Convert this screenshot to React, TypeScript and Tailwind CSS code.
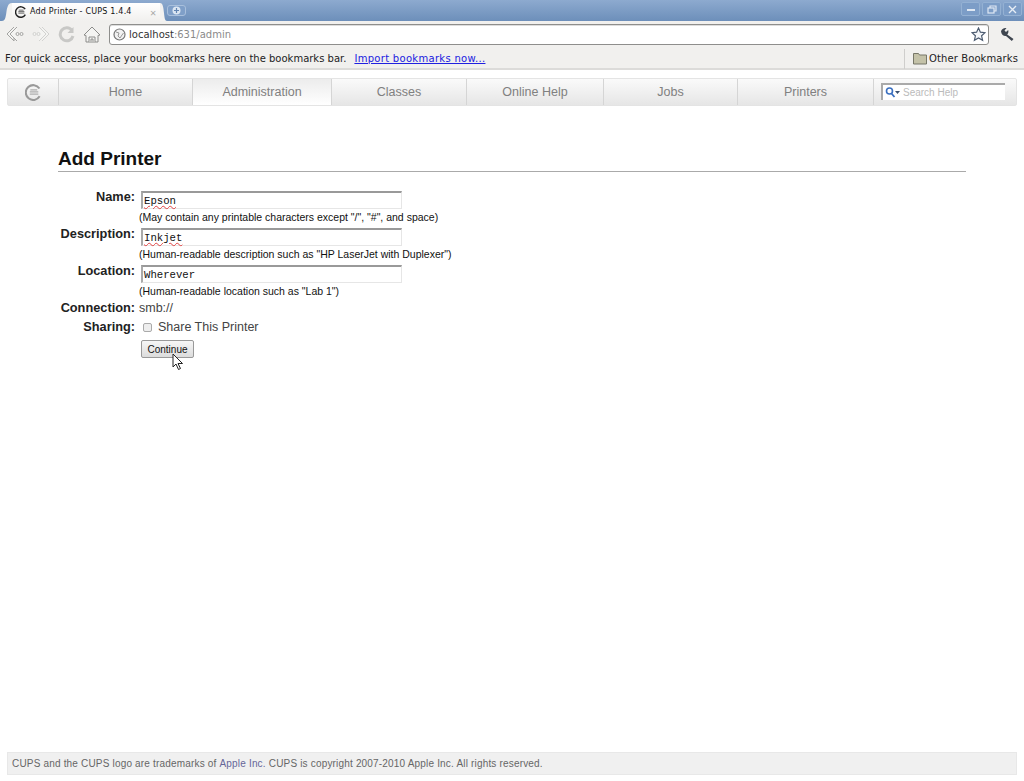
import React from "react";

const navItems = [
  { label: "Home", width: "w-[134px]" },
  { label: "Administration", width: "w-[139px]", active: true },
  { label: "Classes", width: "w-[135px]" },
  { label: "Online Help", width: "w-[137px]" },
  { label: "Jobs", width: "w-[134px]" },
  { label: "Printers", width: "w-[136px]" },
];

function CupsLogo({ size, color }: { size: number; color: string }) {
  return (
    <svg width={size} height={size} viewBox="0 0 16 16" fill="none">
      <path d="M13.6 4.2A7 7 0 1 0 13.8 11.6" stroke={color} strokeWidth="1.9" />
      <path d="M5 5.5h6.5M4.5 7.5h8M4.5 9.5h8" stroke={color} strokeWidth="1.2" opacity="0.75" />
    </svg>
  );
}

function TitleBar() {
  return (
    <div className="flex h-[21px] bg-gradient-to-b from-[#8daacf] to-[#6d8fba]">
      <div className="flex items-end pl-[2px]">
        <svg width="10" height="18" viewBox="0 0 14 18" preserveAspectRatio="none">
          <path d="M0 18C4 18 5 15 6 10C7 5 8 0 14 0V18Z" fill="#f3f2f0" />
        </svg>
        <div className="flex h-[18px] w-[148px] items-center bg-gradient-to-b from-white to-[#f1f0ee] pl-[3px]">
          <CupsLogo size={12} color="#222" />
          <span className="ml-[3px] w-[120px] whitespace-nowrap font-['DejaVu_Sans',sans-serif] text-[8px] tracking-[0.2px] text-[#111]">
            Add Printer - CUPS 1.4.4
          </span>
          <span className="text-[11px] leading-none text-[#aaa]">×</span>
        </div>
        <svg width="7" height="18" viewBox="0 0 14 18" preserveAspectRatio="none">
          <path d="M14 18C10 18 9 15 8 10C7 5 6 0 0 0V18Z" fill="#f3f2f0" />
        </svg>
      </div>
      <div className="mt-[5px] flex h-[11px] w-[19px] items-center justify-center rounded-[3px] border border-[#a9c0dc] bg-[#7f9fc8]">
        <svg width="9" height="9" viewBox="0 0 9 9">
          <circle cx="4.5" cy="4.5" r="4" fill="#dbe6f2" />
          <path d="M4.5 2v5M2 4.5h5" stroke="#6285b3" strokeWidth="1.2" />
        </svg>
      </div>
      <div className="ml-auto mr-[2px] mt-[2px] flex gap-[2px]">
        <div className="flex h-[14px] w-[19px] items-center justify-center rounded-[2px] border border-[#94b1d3] bg-[#7c9dc7]">
          <div className="mt-[2px] h-[2px] w-[8px] bg-[#dfe8f3]" />
        </div>
        <div className="flex h-[14px] w-[19px] items-center justify-center rounded-[2px] border border-[#94b1d3] bg-[#7c9dc7]">
          <svg width="10" height="9" viewBox="0 0 10 9" fill="none" stroke="#dfe8f3" strokeWidth="1.2">
            <rect x="1" y="3" width="6" height="5" />
            <path d="M3 3V1h6v5H7" />
          </svg>
        </div>
        <div className="flex h-[14px] w-[19px] items-center justify-center rounded-[2px] border border-[#94b1d3] bg-[#7c9dc7]">
          <svg width="9" height="9" viewBox="0 0 9 9" stroke="#e6edf5" strokeWidth="1.4">
            <path d="M1 1l7 7M8 1l-7 7" />
          </svg>
        </div>
      </div>
    </div>
  );
}

function Toolbar() {
  return (
    <div className="flex h-[26px] items-center bg-[#f1f0ee]">
      <div className="ml-[6px] flex w-[101px] items-center gap-[8px]">
        <svg width="18" height="16" viewBox="0 0 18 16" fill="#f4f4f2" stroke="#a4a4a2">
          <path d="M8 1L1 8l7 7V11.5" />
          <path d="M11 1L4 8l7 7" />
          <circle cx="11.5" cy="8" r="1.5" />
          <circle cx="15.5" cy="8" r="1.5" />
        </svg>
        <svg width="18" height="16" viewBox="0 0 18 16" fill="#f4f4f2" stroke="#d2d2d0">
          <path d="M10 1l7 7-7 7" />
          <path d="M7 1l7 7-7 7" />
          <circle cx="6.5" cy="8" r="1.5" />
          <circle cx="2.5" cy="8" r="1.5" />
        </svg>
        <svg width="17" height="17" viewBox="0 0 17 17" fill="none">
          <path d="M14 4.5A6.500 6.500 0 1 0 15 10" stroke="#c8c8c6" strokeWidth="3" />
          <path d="M15.500 1v6h-6z" fill="#c8c8c6" />
        </svg>
        <svg width="18" height="17" viewBox="0 0 18 17" fill="#f4f4f2" stroke="#8c8c8a">
          <path d="M1 9l8-8 8 8-2 .5V16H3V9.500z" />
          <path d="M6 16v-5h6v5" />
          <path d="M8 16v-3h2v3" />
        </svg>
      </div>
      <div className="ml-[2px] flex h-[21px] w-[880px] items-center rounded-[3px] border border-[#8e8e8c] bg-white pl-[3px] pr-[2px] shadow-[inset_0_1px_0_#ddd]">
        <svg width="13" height="13" viewBox="0 0 13 13" fill="none">
          <circle cx="6.500" cy="6.500" r="5.500" fill="#f2f2f2" stroke="#777" strokeWidth="1.2" />
          <path d="M3 4l3 1-1 3 2 2 2-3 1.500-2" stroke="#999" />
        </svg>
        <span className="ml-[3px] font-['DejaVu_Sans',sans-serif] text-[10px] text-[#333]">
          localhost<span className="text-[#8a8a8a]">:631/admin</span>
        </span>
        <svg className="ml-auto" width="15" height="15" viewBox="0 0 15 15" fill="#f4f6f9" stroke="#4c5b70" strokeWidth="1.2">
          <path d="M7.500 1l1.900 4.200 4.600.5-3.400 3.100 1 4.500-4.100-2.300-4.100 2.300 1-4.500L1 5.700l4.600-.5z" />
        </svg>
      </div>
      <svg className="ml-[11px]" width="15" height="15" viewBox="0 0 15 15" fill="#3f4650">
        <path d="M1 4.500C1.500 2 4 .5 6.500 1L4.500 3.500 6 5 8.200 3c.6 2-.1 3.700-1 4.500L13.500 12 11.800 14 6 9C4 9.400 1.500 8 1 4.500z" />
      </svg>
    </div>
  );
}

function BookmarksBar() {
  return (
    <div className="flex h-[23px] items-center border-b-2 border-[#dcdbd9] bg-[#f1f0ee] pt-[2px] font-['DejaVu_Sans',sans-serif] text-[10px] text-[#222]">
      <span className="ml-[5px]">For quick access, place your bookmarks here on the bookmarks bar.</span>
      <a className="ml-[8px] tracking-[0.3px] text-[#2020e0] underline">Import bookmarks now...</a>
      <div className="ml-auto flex h-[20px] items-center border-l border-[#cfcecc] pl-[8px] pr-[6px] tracking-[0.1px]">
        <svg width="14" height="13" viewBox="0 0 14 13" fill="#c4c2a8" stroke="#777768">
          <path d="M.5 12V1.500h5l1 1.500h7v9z" />
        </svg>
        <span className="ml-[2px]">Other Bookmarks</span>
      </div>
    </div>
  );
}

function NavBar() {
  return (
    <div className="mx-[7px] mt-[8px] flex h-[28px] rounded-[2px] border border-[#e4e4e4] bg-gradient-to-b from-[#fafafa] to-[#e6e6e6] font-['Liberation_Sans',sans-serif] text-[12.500px] text-[#808080]">
      <div className="flex w-[51px] items-center justify-center border-r border-[#d5d5d5]">
        <CupsLogo size={17} color="#999" />
      </div>
      {navItems.map((item) => (
        <div
          key={item.label}
          className={
            item.active
              ? `flex ${item.width} items-center justify-center border-r border-[#d5d5d5] bg-gradient-to-b from-[#ececec] to-white`
              : `flex ${item.width} items-center justify-center border-r border-[#d5d5d5]`
          }
        >
          {item.label}
        </div>
      ))}
      <div className="ml-[7px] mt-[4px] flex h-[17px] w-[124px] items-center border-l-2 border-t-2 border-[#aaa] bg-white pl-[2px]">
        <svg width="15" height="11" viewBox="0 0 15 11" fill="none">
          <circle cx="4.500" cy="4" r="3" stroke="#3a6fc0" strokeWidth="1.6" />
          <path d="M6.500 6.500l3 3.500" stroke="#3a6fc0" strokeWidth="1.8" />
          <path d="M10 4h5l-2.500 3z" fill="#3a5070" />
        </svg>
        <span className="ml-[3px] text-[10px] text-[#bbb]">Search Help</span>
      </div>
    </div>
  );
}

function TextRow({ label, value, help, misspelled }: { label: string; value: string; help: string; misspelled?: boolean }) {
  return (
    <>
      <div className="pt-[1px] text-right text-[12.750px] leading-[14px] font-bold text-[#222]">{label}</div>
      <div className="h-[37px] pt-[2px]">
        <div className="ml-[2px] flex h-[18px] w-[261px] items-center border border-[#e6e6e6] border-t-2 border-l-2 border-t-[#999] border-l-[#aaa] bg-white pl-[1px] font-['Liberation_Mono',monospace] text-[10.670px] text-[#111]">
          <span className={misspelled ? "underline decoration-wavy decoration-[#e04040] decoration-1" : ""}>{value}</span>
        </div>
        <div className="mt-[1px] h-[14px] whitespace-nowrap text-[10.500px] leading-[14px] text-[#111]">{help}</div>
      </div>
    </>
  );
}

function AddPrinterForm() {
  return (
    <div className="mx-[58px] mt-[42px] font-['Liberation_Sans',sans-serif]">
      <h2 className="h-[24px] border-b border-[#aaa] text-[19px] leading-[22px] font-bold text-[#111]">Add Printer</h2>
      <div className="mt-[17px] grid w-[420px] grid-cols-[77px_1fr] gap-x-[4px]">
        <TextRow label="Name:" value="Epson" help={'(May contain any printable characters except "/", "#", and space)'} misspelled />
        <TextRow label="Description:" value="Inkjet" help={'(Human-readable description such as "HP LaserJet with Duplexer")'} misspelled />
        <TextRow label="Location:" value="Wherever" help={'(Human-readable location such as "Lab 1")'} />
        <div className="h-[19px] pt-[1px] text-right text-[12.750px] leading-[14px] font-bold text-[#222]">Connection:</div>
        <div className="h-[19px] pt-[1px] text-[12.500px] leading-[14px] text-[#444]">smb://</div>
        <div className="pt-[1px] text-right text-[12.750px] leading-[14px] font-bold text-[#222]">Sharing:</div>
        <div className="flex items-center pt-[1px] text-[12.500px] leading-[14px] text-[#444]">
          <div className="ml-[4px] h-[9px] w-[9px] rounded-[2px] border border-[#aaa] bg-[#eee]" />
          <span className="ml-[6px]">Share This Printer</span>
        </div>
        <div />
        <div className="relative mt-[6px] pl-[2px]">
          <div className="flex h-[18px] w-[53px] items-center justify-center rounded-[2px] border border-[#999] bg-gradient-to-b from-[#f6f6f6] to-[#dcdcdc] text-[10px] text-[#111]">
            Continue
          </div>
          <svg className="absolute left-[33px] top-[13px]" width="12" height="18" viewBox="0 0 12 18" fill="#fff" stroke="#222">
            <path d="M1 1v13l3-3 2.500 5.500 2-1L6 10.500h4.500z" />
          </svg>
        </div>
      </div>
    </div>
  );
}

export default function App() {
  return (
    <div className="flex h-[781px] w-[1024px] flex-col overflow-hidden bg-white">
      <TitleBar />
      <Toolbar />
      <BookmarksBar />
      <NavBar />
      <AddPrinterForm />
      <div className="mx-[7px] mb-[6px] mt-auto flex h-[23px] items-center border border-[#e8e8e8] bg-[#f0f0f0] pl-[4px] font-['Liberation_Sans',sans-serif] text-[10px] tracking-[0.18px] text-[#666]">
        CUPS and the CUPS logo are trademarks of&nbsp;<a className="text-[#666699]">Apple Inc.</a>&nbsp;CUPS is copyright 2007-2010 Apple Inc. All rights reserved.
      </div>
    </div>
  );
}
